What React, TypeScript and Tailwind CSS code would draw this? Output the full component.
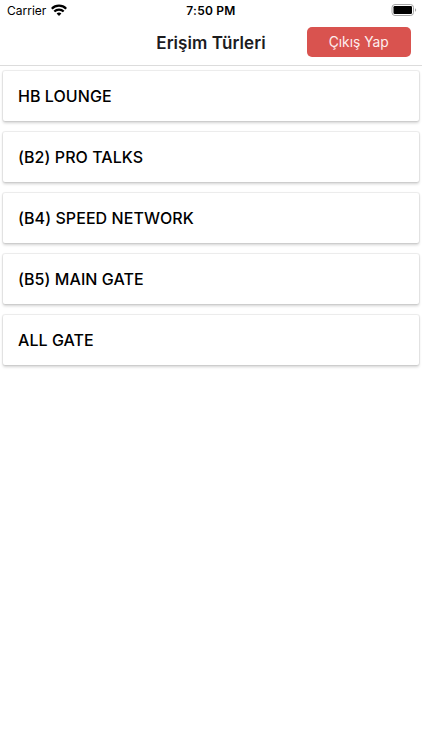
const gates = [
  "HB LOUNGE",
  "(B2) PRO TALKS",
  "(B4) SPEED NETWORK",
  "(B5) MAIN GATE",
  "ALL GATE",
];

function StatusBar() {
  return (
    <div className="grid h-[22px] grid-cols-[1fr_auto_1fr] items-center pl-[7px] pr-[5px] text-black">
      <div className="flex items-center gap-[5px]">
        <span className="w-[39px] whitespace-nowrap text-[12px] leading-none">Carrier</span>
        <svg className="-mt-[2px]" width="16" height="12" viewBox="0 0 16 12" fill="none" stroke="black" strokeWidth="2.2">
          <path d="M.8 4.7a10.2 10.2 0 0 1 14.4 0" />
          <path d="M3.3 7.6a6.6 6.6 0 0 1 9.4 0" />
          <path d="M8 12 5.6 9.6a3.4 3.4 0 0 1 4.8 0Z" fill="black" stroke="none" />
        </svg>
      </div>
      <span className="mr-[2px] text-center text-[12px] font-semibold leading-none tracking-[0.25px]">7:50 PM</span>
      <svg className="-mt-[2px] justify-self-end" width="26" height="12" viewBox="0 0 26 12">
        <rect x="1" y=".5" width="21.5" height="11" rx="3" fill="none" stroke="#a6a6a6" />
        <rect x="2.5" y="2" width="18.5" height="8" rx="1.2" fill="black" />
        <path d="M24 4.2v3.6c.8-.4 1.2-1 1.2-1.8S24.8 4.600 24 4.200Z" fill="#a6a6a6" />
      </svg>
    </div>
  );
}

export default function App() {
  return (
    <div className="min-h-[750px] bg-white font-['Inter',sans-serif]">
      <header className="border-b border-[#dcdcdc]">
        <StatusBar />
        <div className="grid h-[43px] grid-cols-[1fr_auto_1fr] items-center">
          <span />
          <h1 className="text-[17px] font-semibold leading-none tracking-[0.05px] text-[#1c1c1e]">Erişim Türleri</h1>
          <button className="mr-[11px] mb-[3px] h-[30px] w-[104.5px] justify-self-end rounded-[5px] bg-[#d9534f] text-[13.8px] leading-[20px] text-[#fdeeee]">
            Çıkış Yap
          </button>
        </div>
      </header>
      <main className="flex flex-col gap-[11px] px-[3px] pt-[5px]">
        {gates.map((gate) => (
          <div
            key={gate}
            className="flex h-[50px] items-center rounded-[2px] bg-white px-[15px] text-[16px] font-medium tracking-[0.06px] text-black shadow-[0_0_0_1px_rgba(0,0,0,0.05),0_1.5px_3px_rgba(0,0,0,0.18)]"
          >
            {gate}
          </div>
        ))}
      </main>
    </div>
  );
}
